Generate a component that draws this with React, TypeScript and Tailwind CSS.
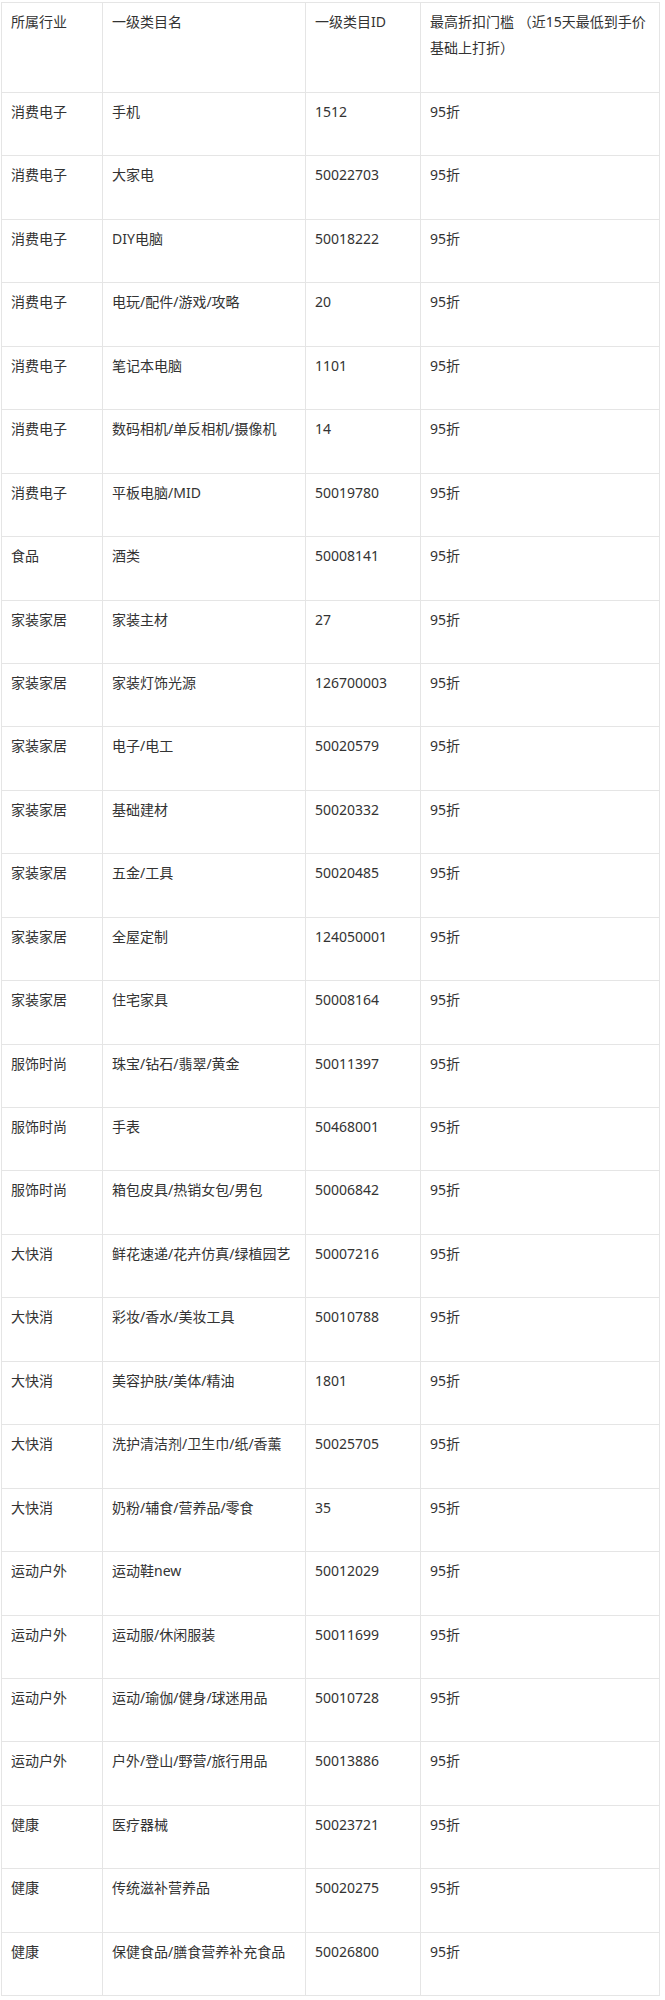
import React from 'react';

type Row = [string, string, string];

const rows: Row[] = [
  ['消费电子', '手机', '1512'],
  ['消费电子', '大家电', '50022703'],
  ['消费电子', 'DIY电脑', '50018222'],
  ['消费电子', '电玩/配件/游戏/攻略', '20'],
  ['消费电子', '笔记本电脑', '1101'],
  ['消费电子', '数码相机/单反相机/摄像机', '14'],
  ['消费电子', '平板电脑/MID', '50019780'],
  ['食品', '酒类', '50008141'],
  ['家装家居', '家装主材', '27'],
  ['家装家居', '家装灯饰光源', '126700003'],
  ['家装家居', '电子/电工', '50020579'],
  ['家装家居', '基础建材', '50020332'],
  ['家装家居', '五金/工具', '50020485'],
  ['家装家居', '全屋定制', '124050001'],
  ['家装家居', '住宅家具', '50008164'],
  ['服饰时尚', '珠宝/钻石/翡翠/黄金', '50011397'],
  ['服饰时尚', '手表', '50468001'],
  ['服饰时尚', '箱包皮具/热销女包/男包', '50006842'],
  ['大快消', '鲜花速递/花卉仿真/绿植园艺', '50007216'],
  ['大快消', '彩妆/香水/美妆工具', '50010788'],
  ['大快消', '美容护肤/美体/精油', '1801'],
  ['大快消', '洗护清洁剂/卫生巾/纸/香薰', '50025705'],
  ['大快消', '奶粉/辅食/营养品/零食', '35'],
  ['运动户外', '运动鞋new', '50012029'],
  ['运动户外', '运动服/休闲服装', '50011699'],
  ['运动户外', '运动/瑜伽/健身/球迷用品', '50010728'],
  ['运动户外', '户外/登山/野营/旅行用品', '50013886'],
  ['健康', '医疗器械', '50023721'],
  ['健康', '传统滋补营养品', '50020275'],
  ['健康', '保健食品/膳食营养补充食品', '50026800'],
];

const Cell: React.FC<{ head?: boolean; children: React.ReactNode }> = ({ head, children }) => (
  <div
    className={`border-r border-b border-[#e5e5e5] pl-[9px] pr-[9px] pt-[6px] leading-[26.25px] whitespace-nowrap ${
      head ? 'h-[90px]' : 'h-[63.44px]'
    }`}
  >
    {children}
  </div>
);

const App: React.FC = () => {
  return (
    <div className="bg-white w-[665px] min-h-[2000px] pt-[2px] pl-[1px]">
      <div
        className="grid grid-cols-[101px_203px_115px_239px] w-[659px] border-l border-t border-[#e5e5e5] text-[14px] text-[#333]"
        style={{ fontFamily: '"Noto Sans", "Noto Sans CJK SC", sans-serif' }}
      >
        <Cell head>所属行业</Cell>
        <Cell head>一级类目名</Cell>
        <Cell head>一级类目ID</Cell>
        <Cell head>
          最高折扣门槛 （近15天最低到手价
          <br />
          基础上打折）
        </Cell>
        {rows.map(([industry, name, id], i) => (
          <React.Fragment key={i}>
            <Cell>{industry}</Cell>
            <Cell>{name}</Cell>
            <Cell>{id}</Cell>
            <Cell>95折</Cell>
          </React.Fragment>
        ))}
      </div>
    </div>
  );
};

export default App;
